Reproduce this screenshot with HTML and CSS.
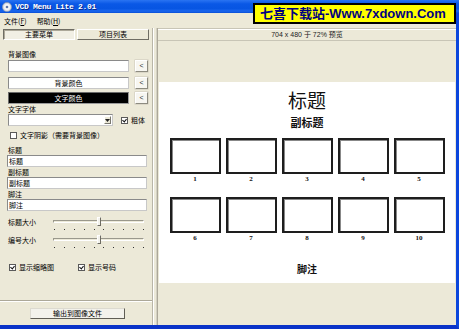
FILE: index.html
```html
<!DOCTYPE html>
<html lang="zh">
<head>
<meta charset="utf-8">
<title>VCD Menu Lite 2.01</title>
<link rel="stylesheet" href="styles.css">
</head>
<body>
<div class="window">
  <div class="titlebar">
    <svg class="disc" width="10" height="10" viewBox="0 0 10 10">
      <circle cx="5" cy="5" r="4.6" fill="#d8dce4" stroke="#8a94a8" stroke-width="0.6"/>
      <circle cx="5" cy="5" r="3" fill="#f4f6fa"/>
      <circle cx="5" cy="5" r="1.3" fill="#6f7d99"/>
      <circle cx="5" cy="5" r="0.6" fill="#2a66e6"/>
    </svg>
    <span class="title">VCD Menu Lite 2.01</span>
  </div>
  <div class="menubar">
    <span>文件(<u>F</u>)</span>
    <span>帮助(<u>H</u>)</span>
  </div>
  <div class="body">
    <div class="left">
      <div class="tabs">
        <div class="tab tab-on">主要菜单</div>
        <div class="tab">项目列表</div>
      </div>
      <div class="pane">
        <div class="lbl lbl-first">背景图像</div>
        <div class="pick-row"><div class="field"></div><div class="btn-sm">&lt;</div></div>
        <div class="pick-row r2"><div class="field">背景颜色</div><div class="btn-sm">&lt;</div></div>
        <div class="pick-row r3"><div class="field dark">文字颜色</div><div class="btn-sm">&lt;</div></div>
        <div class="lbl">文字字体</div>
        <div class="font-row">
          <div class="combo"><span class="combo-arrow"><svg width="5" height="3" viewBox="0 0 5 3"><path d="M0 0h5L2.5 3z" fill="#222"/></svg></span></div>
          <div class="check bold-check"><span class="box on"></span>粗体</div>
        </div>
        <div class="check shadow-row"><span class="box"></span>文字阴影（需要背景图像）</div>
        <div class="lbl lbl-title">标题</div>
        <div class="text">标题</div>
        <div class="lbl">副标题</div>
        <div class="text">副标题</div>
        <div class="lbl">脚注</div>
        <div class="text">脚注</div>
        <div class="slider-row s1">
          <span class="slider-lbl">标题大小</span>
          <div class="slider">
            <div class="track"></div>
            <div class="thumb"></div>
            <div class="ticks"><i></i><i></i><i></i><i></i><i></i><i></i><i></i><i></i><i></i><i></i></div>
          </div>
        </div>
        <div class="slider-row s2">
          <span class="slider-lbl">编号大小</span>
          <div class="slider">
            <div class="track"></div>
            <div class="thumb"></div>
            <div class="ticks"><i></i><i></i><i></i><i></i><i></i><i></i><i></i><i></i><i></i><i></i></div>
          </div>
        </div>
        <div class="check-row">
          <div class="check cw"><span class="box on"></span>显示缩略图</div>
          <div class="check"><span class="box on"></span>显示号码</div>
        </div>
      </div>
      <div class="footer">
        <div class="btn">输出到图像文件</div>
      </div>
    </div>
    <div class="splitter"></div>
    <div class="right">
      <div class="preview-head">704 x 480 于 72% 预览</div>
      <div class="stage">
        <div class="canvas">
          <div class="c-title">标题</div>
          <div class="c-sub">副标题</div>
          <div class="grid g1">
            <div class="cell"><div class="thumbbox"></div><span>1</span></div>
            <div class="cell"><div class="thumbbox"></div><span>2</span></div>
            <div class="cell"><div class="thumbbox"></div><span>3</span></div>
            <div class="cell"><div class="thumbbox"></div><span>4</span></div>
            <div class="cell"><div class="thumbbox"></div><span>5</span></div>
          </div>
          <div class="grid g2">
            <div class="cell"><div class="thumbbox"></div><span>6</span></div>
            <div class="cell"><div class="thumbbox"></div><span>7</span></div>
            <div class="cell"><div class="thumbbox"></div><span>8</span></div>
            <div class="cell"><div class="thumbbox"></div><span>9</span></div>
            <div class="cell"><div class="thumbbox"></div><span>10</span></div>
          </div>
          <div class="c-foot">脚注</div>
        </div>
      </div>
    </div>
  </div>
</div>
<div class="watermark">七喜下载站-Www.7xdown.Com</div>
</body>
</html>
```

FILE: styles.css
```css
* { box-sizing: border-box; margin: 0; padding: 0; }
html, body { width: 459px; height: 329px; overflow: hidden; }
body {
  position: relative;
  background: #ece9d8;
  font-family: "Noto Sans CJK SC", "Liberation Sans", sans-serif;
  font-size: 7px;
  color: #000;
}
.window {
  width: 459px;
  height: 329px;
  display: flex;
  flex-direction: column;
  background: #ece9d8;
  border-right: 3px solid #0b46dc;
  border-bottom: 4px solid #0a33c8;
}
.titlebar {
  height: 13px;
  display: flex;
  align-items: center;
  gap: 3px;
  padding-left: 2px;
  background: linear-gradient(to bottom, #2a74f2 0%, #0a58e6 30%, #0755e2 65%, #1a66ee 85%, #0a4fd6 100%);
  margin-right: -3px;
}
.disc { flex: none; }
.title {
  font-family: "Liberation Mono", monospace;
  font-weight: bold;
  font-size: 8px;
  letter-spacing: -0.3px;
  color: #fff;
  text-shadow: 1px 1px 0 #0a2a8a;
}
.menubar {
  height: 15px;
  display: flex;
  align-items: center;
  gap: 10px;
  padding-left: 4px;
  line-height: 10px;
}
.menubar u { text-decoration: underline; }
.body { flex: 1; display: flex; min-height: 0; }
.left {
  width: 153px;
  flex: none;
  display: flex;
  flex-direction: column;
  border-right: 1px solid #b9b6a8;
}
.tabs {
  height: 12px;
  display: flex;
  gap: 2px;
  padding: 1px 0 0 3px;
}
.tab {
  width: 72px;
  height: 11px;
  line-height: 9px;
  text-align: center;
  border: 1px solid;
  border-color: #fff #6f6d64 #6f6d64 #fff;
  background: #ece9d8;
}
.tab-on {
  border-color: #6f6d64 #fff #fff #6f6d64;
  background: #f1efe4;
  box-shadow: inset 1px 1px 0 #aca899;
}
.pane {
  flex: 1;
  display: flex;
  flex-direction: column;
  padding-left: 8px;
}
.lbl { height: 10px; line-height: 10px; }
.lbl-first { margin-top: 9px; }
.pick-row { display: flex; height: 12px; margin-top: 1px; }
.pick-row.r2 { margin-top: 5px; }
.pick-row.r3 { margin-top: 3px; }
.field {
  width: 121px;
  height: 12px;
  line-height: 10px;
  text-align: center;
  background: #fff;
  border: 1px solid;
  border-color: #8a8a8a #c8c8c8 #c8c8c8 #8a8a8a;
}
.field.dark { background: #000; color: #fff; border-color: #6a6a6a #9a9a9a #9a9a9a #6a6a6a; }
.btn-sm {
  width: 13px;
  height: 12px;
  margin-left: 6px;
  line-height: 10px;
  text-align: center;
  font-family: "Liberation Sans", sans-serif;
  font-size: 7px;
  color: #333;
  background: #f7f6f1;
  border: 1px solid;
  border-color: #fff #8d8b80 #8d8b80 #fff;
  box-shadow: 0 0 0 0.5px #c9c6b8;
}
.font-row { display: flex; align-items: center; height: 12px; }
.combo {
  width: 105px;
  height: 12px;
  background: #fff;
  border: 1px solid;
  border-color: #8a8a8a #c8c8c8 #c8c8c8 #8a8a8a;
  display: flex;
  justify-content: flex-end;
  padding: 1px;
}
.combo-arrow {
  width: 7px;
  display: flex;
  align-items: center;
  justify-content: center;
  background: #ece9d8;
  border: 1px solid;
  border-color: #fff #7a786e #7a786e #fff;
}
.check {
  display: flex;
  align-items: center;
  height: 10px;
  line-height: 10px;
}
.bold-check { margin-left: 8px; }
.box {
  width: 7px;
  height: 7px;
  margin-right: 3px;
  background: #fff;
  border: 1px solid #5a5a5a;
  position: relative;
  flex: none;
}
.box.on::after {
  content: "";
  position: absolute;
  left: 1px;
  top: 0;
  width: 2px;
  height: 3px;
  border-right: 1.2px solid #111;
  border-bottom: 1.2px solid #111;
  transform: rotate(40deg);
}
.shadow-row { margin-top: 4px; margin-left: 2px; }
.lbl-title { margin-top: 5px; }
.text {
  width: 140px;
  height: 12px;
  margin-left: -1px;
  line-height: 10px;
  padding-left: 1px;
  background: #fff;
  border: 1px solid;
  border-color: #8a8a8a #c8c8c8 #c8c8c8 #8a8a8a;
}
.slider-row { display: flex; height: 17px; }
.slider-row.s1 { margin-top: 4px; }
.slider-row.s2 { margin-top: 1px; }
.slider-lbl { width: 45px; line-height: 14px; }
.slider { width: 91px; position: relative; }
.track {
  position: absolute;
  left: 0; right: 0; top: 5px;
  height: 3px;
  border: 1px solid;
  border-color: #9a988c #fff #fff #9a988c;
}
.thumb {
  position: absolute;
  left: 44px;
  top: 2px;
  width: 4px;
  height: 9px;
  background: #f3f2ec;
  border: 1px solid;
  border-color: #fff #6d6b62 #6d6b62 #fff;
}
.ticks {
  position: absolute;
  left: 1px; right: 0; top: 14px;
  display: flex;
  justify-content: space-between;
}
.ticks i { display: block; width: 1px; height: 1px; background: #333; }
.check-row { display: flex; margin-top: 12px; margin-left: 1px; }
.cw { width: 69px; }
.footer {
  height: 25px;
  flex: none;
  border-top: 1px solid #aca899;
  box-shadow: inset 0 1px 0 #fff;
  padding: 7px 0 0 30px;
}
.btn {
  width: 95px;
  height: 11px;
  line-height: 9px;
  text-align: center;
  background: #f3f2ec;
  border: 1px solid;
  border-color: #dcdad0 #5f5d55 #5f5d55 #dcdad0;
}
.splitter {
  width: 4px;
  flex: none;
  box-shadow: inset 1px 0 0 #fff, inset -1px 0 0 #d3d0c2;
}
.right {
  flex: 1;
  display: flex;
  flex-direction: column;
  border-left: 1px solid #aca899;
}
.preview-head {
  height: 13px;
  line-height: 11px;
  text-align: center;
  font-family: "Liberation Sans", "Noto Sans CJK SC", sans-serif;
  font-size: 7px;
  color: #222;
  border-top: 1px solid #c8c5b6;
  border-bottom: 1px solid #c8c5b6;
  box-shadow: inset 0 1px 0 #fff;
}
.stage { flex: 1; padding: 41px 0 0 1px; }
.canvas {
  width: 296px;
  height: 201px;
  background: #fff;
  display: flex;
  flex-direction: column;
  align-items: center;
  padding-top: 4px;
}
.c-title {
  font-size: 19px;
  line-height: 28px;
  color: #111;
}
.c-sub {
  font-size: 11px;
  line-height: 16px;
  font-weight: bold;
  color: #111;
}
.grid { display: flex; gap: 5px; }
.g1 { margin-top: 8px; }
.g2 { margin-top: 13px; }
.cell { width: 51px; display: flex; flex-direction: column; align-items: center; }
.thumbbox {
  width: 51px;
  height: 36px;
  border: 2px solid #1e1e1e;
  box-shadow: inset 1px 1px 0 #888;
}
.cell span {
  height: 10px;
  line-height: 10px;
  font-family: "Liberation Serif", serif;
  font-weight: bold;
  font-size: 7px;
  color: #111;
}
.c-foot {
  margin-top: 20px;
  font-size: 10px;
  line-height: 12px;
  font-weight: bold;
  color: #111;
}
.watermark {
  position: absolute;
  left: 253px;
  top: 3px;
  width: 203px;
  height: 21px;
  background: #ffff00;
  border: 2px solid #000;
  padding-left: 5px;
  font-family: "Liberation Sans", "Noto Sans CJK SC", sans-serif;
  font-weight: bold;
  font-size: 13px;
  line-height: 17px;
  color: #000080;
  white-space: nowrap;
}
```
